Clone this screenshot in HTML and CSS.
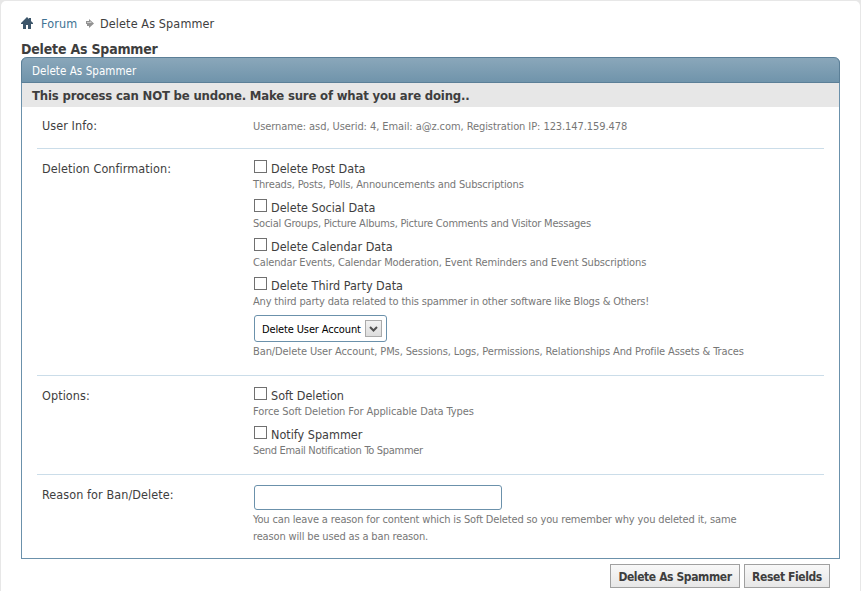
FILE: index.html
```html
<!DOCTYPE html>
<html lang="en">
<head>
<meta charset="utf-8">
<title>Delete As Spammer</title>
<link rel="stylesheet" href="styles.css">
</head>
<body>
<main class="page">
  <nav class="crumbs">
    <svg class="home" width="12" height="12" viewBox="0 0 12 12"><path d="M6 0 0 6v1h2v5h3V8h2v4h3V7h2V6L10 4V1H8v1z" fill="#3d566b"/></svg>
    <a class="crumb-link">Forum</a>
    <svg class="arrow" width="8" height="9" viewBox="0 0 8 9"><path d="M3 0 8 4.5 3 9V7H1V5H0V2h3z" fill="#929292"/><path d="M1 3h3V2l2 2H1z" fill="#ccc"/></svg>
    <span class="crumb-here">Delete As Spammer</span>
  </nav>
  <h1 class="title">Delete As Spammer</h1>
  <form class="panel">
    <h2 class="panel-head"><span>Delete As Spammer</span></h2>
    <h3 class="warning"><span>This process can NOT be undone. Make sure of what you are doing..</span></h3>
    <section class="row row-info">
      <div class="label">User Info:</div>
      <div class="field"><p class="desc info">Username: asd, Userid: 4, Email: a@z.com, Registration IP: 123.147.159.478</p></div>
    </section>
    <section class="row row-confirm">
      <div class="label">Deletion Confirmation:</div>
      <div class="field">
        <label class="check"><input type="checkbox"><span>Delete Post Data</span></label>
        <p class="desc">Threads, Posts, Polls, Announcements and Subscriptions</p>
        <label class="check"><input type="checkbox"><span>Delete Social Data</span></label>
        <p class="desc social">Social Groups, Picture Albums, Picture Comments and Visitor Messages</p>
        <label class="check"><input type="checkbox"><span>Delete Calendar Data</span></label>
        <p class="desc">Calendar Events, Calendar Moderation, Event Reminders and Event Subscriptions</p>
        <label class="check"><input type="checkbox"><span>Delete Third Party Data</span></label>
        <p class="desc third">Any third party data related to this spammer in other software like Blogs &amp; Others!</p>
        <div class="select"><span class="select-value">Delete User Account</span><i class="drop"><svg width="15" height="15" viewBox="0 0 15 15"><path d="M4 6l3.5 3.5L11 6" fill="none" stroke="#505050" stroke-width="2"/></svg></i></div>
        <p class="desc account">Ban/Delete User Account, PMs, Sessions, Logs, Permissions, Relationships And Profile Assets &amp; Traces</p>
      </div>
    </section>
    <section class="row row-options">
      <div class="label">Options:</div>
      <div class="field">
        <label class="check"><input type="checkbox"><span>Soft Deletion</span></label>
        <p class="desc force">Force Soft Deletion For Applicable Data Types</p>
        <label class="check"><input type="checkbox"><span>Notify Spammer</span></label>
        <p class="desc notify">Send Email Notification To Spammer</p>
      </div>
    </section>
    <section class="row row-reason">
      <div class="label">Reason for Ban/Delete:</div>
      <div class="field">
        <input class="text" type="text">
        <p class="desc">You can leave a reason for content which is Soft Deleted so you remember why you deleted it, same<br>reason will be used as a ban reason.</p>
      </div>
    </section>
  </form>
  <div class="actions">
    <button class="btn btn-delete">Delete As Spammer</button>
    <button class="btn btn-reset">Reset Fields</button>
  </div>
</main>
</body>
</html>
```
FILE: styles.css
```css
* { box-sizing: border-box; }
html { background: #e7e7e7; }
body {
  margin: 0;
  height: 591px;
  overflow: hidden;
  color: #3e3e3e;
  font-family: "DejaVu Sans Condensed", "DejaVu Sans", sans-serif;
  font-stretch: condensed;
  font-size: 12.5px;
  white-space: nowrap;
}
h1, h2, h3, p { margin: 0; }
.page {
  height: 600px;
  margin: 1px 1px 0;
  padding: 14px 20px 0;
  background: #fff;
  border-radius: 5px 5px 0 0;
}
.crumbs { display: flex; align-items: center; height: 18px; line-height: 20px; letter-spacing: .12px; }
.home { margin-top: -2px; }
.crumb-link { margin-left: 8px; width: 45px; color: #417394; }
.arrow { margin: -1px 6px 0 0; }
.title { height: 24px; line-height: 33px; font-size: 14px; letter-spacing: -.2px; }
.panel { height: 502px; border: 1px solid #6b91ab; border-top: 0; border-radius: 6px 6px 0 0; }
.panel-head {
  height: 26px;
  margin: 0 -1px;
  padding-left: 10px;
  border: 1px solid #5b7f97;
  border-radius: 6px 6px 0 0;
  background: linear-gradient(#8aa7ba, #7094ab);
  color: #fff;
  font-size: 11.5px;
  font-weight: normal;
  line-height: 26px;
  letter-spacing: .06px;
}
.warning { height: 24px; padding-left: 10px; background: #e7e7e7; font-size: 13px; line-height: 26px; letter-spacing: -.18px; }
.row { display: flex; margin: 0 15px; padding: 9px 0 0 5px; border-bottom: 1px solid #cbdde9; }
.row:last-child { border-bottom: 0; }
.row-info { height: 42px; }
.row-confirm { height: 227px; }
.row-options { height: 99px; }
.row-reason { height: 83px; }
.label { width: 211px; line-height: 21px; letter-spacing: .08px; }
.row-info .label { line-height: 19px; }
.desc { height: 17px; color: #777; font-size: 11px; line-height: 17px; letter-spacing: -.15px; }
.info { margin-top: 2px; letter-spacing: -.08px; }
.social { letter-spacing: -.22px; }
.third { letter-spacing: -.18px; }
.account { letter-spacing: -.11px; }
.force { letter-spacing: -.09px; }
.notify { letter-spacing: -.3px; }
.check { display: flex; align-items: center; height: 22px; line-height: 22px; }
.check input {
  appearance: none;
  width: 13px;
  height: 13px;
  margin: -5px 4px 0 1px;
  border: 1px solid #707070;
  background: #fff;
}
.check + .desc { margin-top: -4px; margin-bottom: 4px; }
.select {
  display: flex;
  align-items: center;
  justify-content: space-between;
  width: 133px;
  height: 27px;
  margin: 5px 0 1px 1px;
  padding: 0 4px 0 7px;
  border: 1px solid #6b91ab;
  border-radius: 3px;
  color: #000;
  font-size: 11px;
  letter-spacing: -.13px;
}
.select-value { padding-top: 1px; }
.drop { display: flex; width: 17px; height: 17px; border: 1px solid #aaa; background: linear-gradient(#f2f2f2, #ddd); }
.text { display: block; width: 248px; height: 25px; margin: 1px 0 1px 1px; border: 1px solid #6b91ab; border-radius: 3px; background: #fff; }
.actions { display: flex; justify-content: flex-end; gap: 4px; padding: 5px 10px 0 0; }
.btn {
  height: 24px;
  padding: 2px 0 0;
  border: 1px solid #a0a0a0;
  background: linear-gradient(#f8f8f8, #e7e7e7);
  color: #3e3e3e;
  font: bold 12px "DejaVu Sans Condensed", "DejaVu Sans", sans-serif;
  font-stretch: condensed;
  letter-spacing: -.4px;
}
.btn-delete { width: 130px; }
.btn-reset { width: 86px; }
```
